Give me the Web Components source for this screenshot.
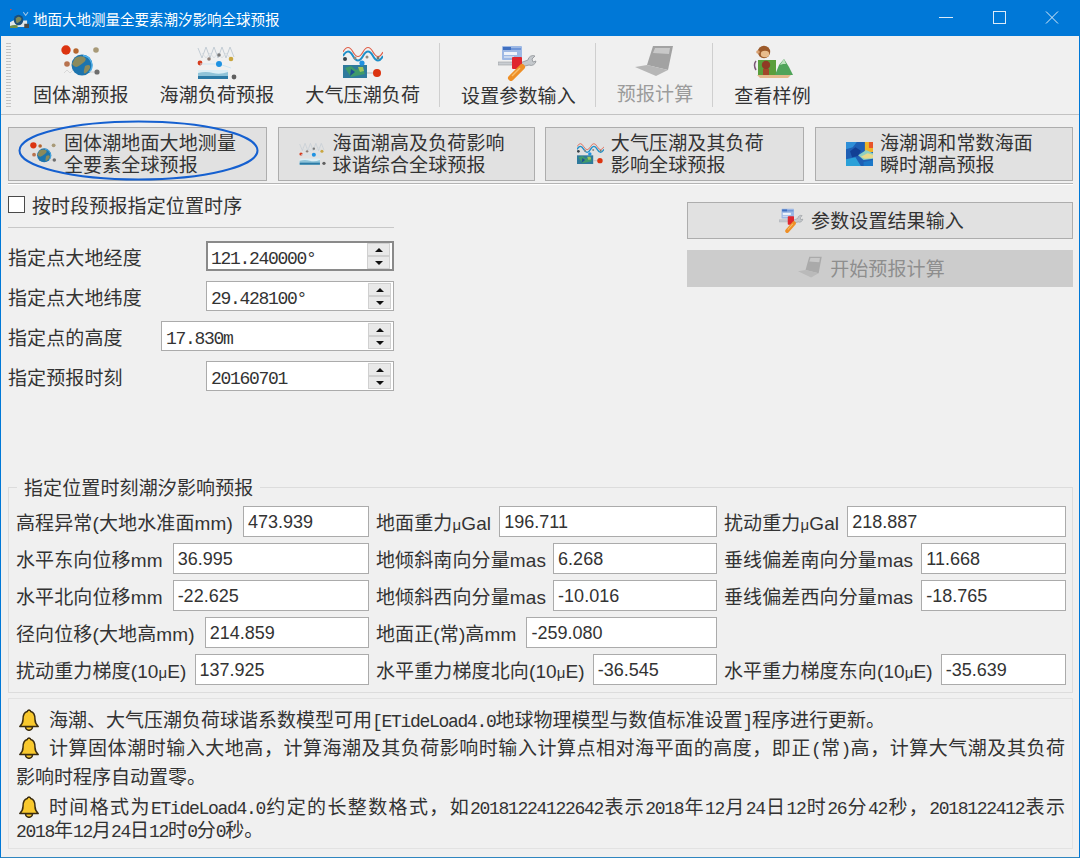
<!DOCTYPE html>
<html lang="zh-CN">
<head>
<meta charset="utf-8">
<title>地面大地测量全要素潮汐影响全球预报</title>
<style>
  html, body { margin: 0; height: 100%; }
  body { font-family: "Liberation Sans", "Noto Sans CJK SC", sans-serif; font-size: 19px; letter-spacing: .12px; color: #333; background: #f0f0f0; }
</style>
</head>
<body>
<tide-app>
  <win-titlebar slot="title">地面大地测量全要素潮汐影响全球预报</win-titlebar>

  <app-toolbar slot="toolbar">
    <tool-item icon="solid" shift="2">固体潮预报</tool-item>
    <tool-item icon="ocean" shift="2">海潮负荷预报</tool-item>
    <tool-item icon="air" shift="2">大气压潮负荷</tool-item>
    <tool-sep></tool-sep>
    <tool-item icon="tools" shift="3">设置参数输入</tool-item>
    <tool-sep></tool-sep>
    <tool-item icon="laptop" shift="1" disabled>预报计算</tool-item>
    <tool-sep></tool-sep>
    <tool-item icon="monkey" shift="3">查看样例</tool-item>
  </app-toolbar>

  <tab-btn slot="tabs" icon="solid" ringed>固体潮地面大地测量<br>全要素全球预报</tab-btn>
  <tab-btn slot="tabs" icon="ocean">海面潮高及负荷影响<br>球谐综合全球预报</tab-btn>
  <tab-btn slot="tabs" icon="air">大气压潮及其负荷<br>影响全球预报</tab-btn>
  <tab-btn slot="tabs" icon="heat">海潮调和常数海面<br>瞬时潮高预报</tab-btn>

  <check-row slot="left">按时段预报指定位置时序</check-row>
  <spin-field slot="left" label="指定点大地经度" value="121.240000°" width="188" focused></spin-field>
  <spin-field slot="left" label="指定点大地纬度" value="29.428100°" width="188"></spin-field>
  <spin-field slot="left" label="指定点的高度" value="17.830m" width="233"></spin-field>
  <spin-field slot="left" label="指定预报时刻" value="20160701" width="188"></spin-field>

  <tab-btn slot="right" icon="tools" wide>参数设置结果输入</tab-btn>
  <tab-btn slot="right" icon="laptop" wide disabled>开始预报计算</tab-btn>

  <tide-group slot="group" legend="指定位置时刻潮汐影响预报">
    <tide-field label="高程异常(大地水准面mm)" value="473.939"></tide-field>
    <tide-field label="地面重力μGal" value="196.711" gap="8"></tide-field>
    <tide-field label="扰动重力μGal" value="218.887" gap="8"></tide-field>
    <tide-field label="水平东向位移mm" value="36.995"></tide-field>
    <tide-field label="地倾斜南向分量mas" value="6.268" gap="7"></tide-field>
    <tide-field label="垂线偏差南向分量mas" value="11.668" gap="8"></tide-field>
    <tide-field label="水平北向位移mm" value="-22.625"></tide-field>
    <tide-field label="地倾斜西向分量mas" value="-10.016" gap="7"></tide-field>
    <tide-field label="垂线偏差西向分量mas" value="-18.765" gap="8"></tide-field>
    <tide-field label="径向位移(大地高mm)" value="214.859"></tide-field>
    <tide-field label="地面正(常)高mm" value="-259.080"></tide-field>
    <span></span>
    <tide-field label="扰动重力梯度(10μE)" value="137.925" gap="8"></tide-field>
    <tide-field label="水平重力梯度北向(10μE)" value="-36.545" gap="8"></tide-field>
    <tide-field label="水平重力梯度东向(10μE)" value="-35.639" gap="8"></tide-field>
  </tide-group>

  <note-panel slot="notes">
    <note-line bell>海潮、大气压潮负荷球谐系数模型可用<m-t>[ETideLoad4.0</m-t>地球物理模型与数值标准设置<m-t>]</m-t>程序进行更新。</note-line>
    <note-line bell full top="4">计算固体潮时输入大地高，计算海潮及其负荷影响时输入计算点相对海平面的高度，即正<m-t>(</m-t>常<m-t>)</m-t>高，计算大气潮及其负荷</note-line>
    <note-line top="5">影响时程序自动置零。</note-line>
    <note-line bell full top="6">时间格式为<m-t>ETideLoad4.0</m-t>约定的长整数格式，如<m-t>20181224122642</m-t>表示<m-t>2018</m-t>年<m-t>12</m-t>月<m-t>24</m-t>日<m-t>12</m-t>时<m-t>26</m-t>分<m-t>42</m-t>秒，<m-t>2018122412</m-t>表示</note-line>
    <note-line top="-1"><m-t>2018</m-t>年<m-t>12</m-t>月<m-t>24</m-t>日<m-t>12</m-t>时<m-t>0</m-t>分<m-t>0</m-t>秒。</note-line>
  </note-panel>
</tide-app>

<script>
const ICONS = {
  solid: `
    <circle cx="5" cy="5" r="4.700" fill="#dc3410"/>
    <circle cx="15" cy="6" r="2.700" fill="#b5662e"/>
    <circle cx="35" cy="5" r="2.800" fill="#a89a78"/>
    <circle cx="6" cy="19" r="2.800" fill="#b8734f"/>
    <path d="M3 28l3-3 3 3 3-3 3 3" fill="none" stroke="#d8d8d8"/>
    <circle cx="21" cy="20" r="10.500" fill="#1c74ae"/>
    <path d="M14 13q5-3 9-1t-1 6-7 4-4-3zM24 21q4-2 5 0t-3 6-3-2z" fill="#8a8a5c"/>
    <path d="M22 10.500a10 10 0 0 1 6 17" fill="none" stroke="#4fb0ea" stroke-width="1.300"/>
    <path d="M29 27h4" stroke="#ccc"/>
    <circle cx="36" cy="27" r="2.600" fill="#6e6e6e"/>`,
  ocean: `
    <path d="M1 3l4 10 4-11 4 11 4-11 4 11 4-11 4 11 4-11 4 10" fill="none" stroke="#c3ccd4" stroke-width="1"/>
    <path d="M5 8l4 5 4-5 4 5 4-5 4 5 4-5 4 5" fill="none" stroke="#d6dce0" stroke-width=".8"/>
    <circle cx="3" cy="18" r="2.400" fill="#d63c1e"/>
    <circle cx="12" cy="14" r="1.800" fill="#8f8078"/>
    <circle cx="22" cy="10" r="1.800" fill="#777"/>
    <circle cx="34" cy="14" r="2.300" fill="#c9a63f"/>
    <path d="M3 19l19 0 12 4" fill="none" stroke="#cfe4f0"/>
    <circle cx="22" cy="19" r="3" fill="#1f92e2"/>
    <path d="M1 25h30v9H1z" fill="#dbeef5"/>
    <path d="M1 28q8-2 15 0t15-1v7H1z" fill="#8fc3d8"/>
    <path d="M1 31h30v3H1z" fill="#2b7aa6"/>
    <circle cx="37" cy="32" r="2.400" fill="#5f5f5f"/>`,
  air: `
    <path d="M0 8q5-9 10 0t10 0 10 0 10 0" fill="none" stroke="#e0604a" stroke-width="1.200" transform="translate(0 -1)"/>
    <path d="M0 9q5-9 10 0t10 0 10 0 10 0" fill="none" stroke="#1f8fc8" stroke-width="2" transform="translate(0 2)"/>
    <circle cx="2" cy="14" r="2" fill="#38424a"/><circle cx="12" cy="13" r="1.500" fill="#8f8a80"/><circle cx="24" cy="12" r="1.500" fill="#8f8a80"/><circle cx="35" cy="13" r="1.500" fill="#6f7a70"/>
    <rect y="20" width="24" height="13" fill="#2f7a9c"/>
    <path d="M2 23l6-2 5 4 6-3 3 7-14 3z" fill="#3f9a6a"/><path d="M8 24l4 3-5 4z" fill="#1e4f94"/><path d="M15 22l5 0 1 4-4 1z" fill="#9fc65a"/>
    <circle cx="19" cy="18" r="2.600" fill="#1f92e2"/>
    <path d="M24 28h7" stroke="#bbb"/>
    <circle cx="34" cy="28" r="4" fill="#dc3410"/>`,
  tools: `
    <rect x="4" y="1" width="20" height="14" rx="1" fill="#9db8e4"/>
    <rect x="5" y="2" width="8" height="3" fill="#3f6fc0"/><rect x="13" y="3" width="10" height="2" fill="#6f96d8"/>
    <rect x="6" y="7" width="13" height="3" fill="#eef3fa"/><rect x="6" y="11" width="10" height="2" fill="#c9d8ef"/>
    <path d="M0 17h17v3H0z" fill="#c9cdd2" stroke="#9a9ea2" stroke-width=".6"/>
    <path d="M22 18l8-3a5 5 0 0 1 7-4l-3 3 1 3 3-1a5 5 0 0 1-7 4l-8 2z" fill="#c4c8cc" stroke="#8e9296" stroke-width=".8"/>
    <rect x="14" y="12" width="10" height="12" rx="1" fill="#e0262e"/>
    <path d="M24 22L13 33" stroke="#ee8f26" stroke-width="6" stroke-linecap="round"/>
    <path d="M22 23L14 31" stroke="#f8bd6a" stroke-width="1.500"/>`,
  laptop: `
    <path d="M18 1h20l-5 24-21-5z" fill="#a2a2a2"/>
    <path d="M20 3h15l-1 6-16-1z" fill="#c8c8c8"/>
    <path d="M12 20l21 5-12 6L0 22z" fill="#b6b6b6"/>`,
  monkey: `
    <circle cx="11" cy="7" r="6.200" fill="#9c5a2a"/>
    <ellipse cx="12" cy="9" rx="4.200" ry="3.300" fill="#e9bc8c"/>
    <circle cx="5" cy="7" r="1.800" fill="#d8a070"/>
    <path d="M3 16q-3 4 0 9" fill="none" stroke="#7d5a78" stroke-width="1.500"/>
    <path d="M5 15h18v16H5z" fill="#5a9e3c"/>
    <circle cx="13" cy="20" r="4.200" fill="#8f3a24"/>
    <path d="M10 24h6v7h-6z" fill="#a2462a"/>
    <path d="M22 30l4-10 5-6 5 8 4 8z" fill="#4fa45a"/>
    <path d="M27 20l4-6 2 5-3 0z" fill="#bfe3c0"/>
    <path d="M4 30h34l-3 3H7z" fill="#e3b98c"/>`,
  heat: `
    <rect width="40" height="36" fill="#1f5fb4"/>
    <rect x="28" width="12" height="15" fill="#f0b428"/>
    <rect x="34" width="6" height="9" fill="#e8542a"/>
    <path d="M0 0h16l-6 8-10 3z" fill="#2f8fd8"/>
    <path d="M6 14l8-6 8 5-4 8-9 2z" fill="#123f94"/>
    <path d="M18 20l12-8 10 5v8l-14 2z" fill="#8fd0c0"/>
    <path d="M22 22l10-5 8 2v5l-12 1z" fill="#e8d98a"/>
    <path d="M0 26l14-3 8 13H0z" fill="#2aa0d8"/>
    <path d="M26 30l14-3v9H26z" fill="#1c78c8"/>`,
  app: `
    <circle cx="1" cy="0" r="2.500" fill="#c8504a"/>
    <path d="M28 6l5 6 5-6" fill="none" stroke="#9fc4e4" stroke-width="2"/>
    <path d="M0 25q10-6 20-3l16 0v12H0z" fill="#dfe6ea"/>
    <path d="M0 32q8-3 16-1v5H0z" fill="#6f8f4a"/>
    <circle cx="18" cy="21" r="10" fill="#1d4f7a"/>
    <path d="M12 18q5-5 10-2t-2 8-7 0z" fill="#7d8a5a"/>
    <rect x="30" y="28" width="10" height="8" fill="#4a4a4a"/>`
};

class AppIcon extends HTMLElement {
  constructor() {
    super();
    this.attachShadow({ mode: "open" });
  }

  connectedCallback() {
    const w = this.getAttribute("w") || 40;
    const h = this.getAttribute("h") || 36;
    this.shadowRoot.innerHTML = /* html */`
    <style>
      :host { display: block; flex: none; width: ${w}px; height: ${h}px; }
      svg { display: block; width: 100%; height: 100%; filter: blur(.4px); }
    </style>
    <svg viewBox="0 0 40 36" preserveAspectRatio="none">${ICONS[this.getAttribute("name")] || ""}</svg>`;
  }
}

class TideApp extends HTMLElement {
  constructor() {
    super();
    this.attachShadow({ mode: "open" });
    this.shadowRoot.innerHTML = /* html */`
    <style>
      :host {
        display: flex;
        flex-direction: column;
        box-sizing: border-box;
        height: 858px;
        border: 1px solid #0078d7;
        border-top: 0;
        border-bottom-color: #2f86c0;
      }
      .body { display: flex; flex-direction: column; flex: 1; padding: 0 6px 8px 7px; min-height: 0; }
      .tabs { display: grid; grid-template-columns: 259px 257px 259px 258px; justify-content: space-between; margin-top: 12px; height: 54px; }
      .rule { height: 1px; margin-top: 2px; background: #b4b4b4; box-shadow: 0 1px 0 #fff; }
      .main { display: flex; justify-content: space-between; flex: 1; }
      .left { width: 386px; display: flex; flex-direction: column; gap: 10px; }
      .right { width: 386px; display: grid; grid-auto-rows: 37px; gap: 11px; padding-top: 18px; }
    </style>
    <slot name="title"></slot>
    <slot name="toolbar"></slot>
    <div class="body">
      <div class="tabs"><slot name="tabs"></slot></div>
      <div class="rule"></div>
      <div class="main">
        <div class="left"><slot name="left"></slot></div>
        <div class="right"><slot name="right"></slot></div>
      </div>
      <slot name="group"></slot>
      <slot name="notes"></slot>
    </div>`;
  }
}

class WinTitlebar extends HTMLElement {
  constructor() {
    super();
    this.attachShadow({ mode: "open" });
    this.shadowRoot.innerHTML = /* html */`
    <style>
      :host {
        display: flex;
        align-items: center;
        height: 36px;
        margin: 0 -1px;
        padding-left: 10px;
        background: #0078d7;
        color: #fff;
        font-size: 14.5px;
        letter-spacing: 0;
      }
      app-icon { margin-right: 4px; }
      .title { flex: 1; }
      .ctl { display: flex; margin-right: 2px; }
      .btn { width: 53px; display: flex; justify-content: center; }
      svg { display: block; width: 14px; height: 14px; fill: none; stroke: #dcebf8; stroke-width: 1; }
    </style>
    <app-icon name="app" w="19" h="19"></app-icon>
    <span class="title"><slot></slot></span>
    <div class="ctl">
      <div class="btn"><svg viewBox="0 0 14 14"><path d="M0 6.500h14"/></svg></div>
      <div class="btn"><svg viewBox="0 0 14 14"><rect x="1.500" y=".5" width="12" height="12"/></svg></div>
      <div class="btn"><svg viewBox="0 0 14 14"><path d="M1 .5l12 12M13 .5l-12 12"/></svg></div>
    </div>`;
  }
}

class AppToolbar extends HTMLElement {
  constructor() {
    super();
    this.attachShadow({ mode: "open" });
    this.shadowRoot.innerHTML = /* html */`
    <style>
      :host {
        display: flex;
        box-sizing: border-box;
        height: 79px;
        padding-left: 5px;
        border-bottom: 1px solid #c2c2c2;
      }
      .grip {
        width: 5px;
        margin: 6px 6.500px 5px 0;
        background: radial-gradient(circle, #bdbdbd 0.8px, transparent 1px) 0 0 / 2.500px 3px;
      }
    </style>
    <div class="grip"></div>
    <slot></slot>`;
  }
}

class ToolItem extends HTMLElement {
  constructor() {
    super();
    this.attachShadow({ mode: "open" });
  }

  connectedCallback() {
    const shift = this.getAttribute("shift") || 0;
    this.shadowRoot.innerHTML = /* html */`
    <style>
      :host {
        display: flex;
        flex-direction: column;
        align-items: center;
        padding: 9px 15.500px 0;
        color: #333;
        white-space: nowrap;
      }
      :host([disabled]) { color: #9b9b9b; }
      app-icon { margin-bottom: -1px; }
      span { line-height: 28px; margin-top: ${shift}px; }
    </style>
    <app-icon name="${this.getAttribute("icon")}"></app-icon>
    <span><slot></slot></span>`;
  }
}

class ToolSep extends HTMLElement {
  constructor() {
    super();
    this.attachShadow({ mode: "open" });
    this.shadowRoot.innerHTML = /* html */`
    <style>
      :host { display: block; width: 1px; height: 64px; margin: 7px 5.500px 0 3.500px; background: #cfcfcf; }
    </style>`;
  }
}

class TabBtn extends HTMLElement {
  constructor() {
    super();
    this.attachShadow({ mode: "open" });
  }

  connectedCallback() {
    const wide = this.hasAttribute("wide");
    const ring = this.hasAttribute("ringed") ? /* html */`
      <svg class="ring" viewBox="0 0 241 61"><ellipse cx="120.500" cy="30.500" rx="119" ry="29" /></svg>` : "";
    this.shadowRoot.innerHTML = /* html */`
    <style>
      :host {
        position: relative;
        display: flex;
        align-items: center;
        justify-content: center;
        gap: 7px;
        box-sizing: border-box;
        padding-right: ${wide ? 17 : 9}px;
        background: #e1e1e1;
        border: 1px solid #adadad;
        line-height: 22px;
        color: #333;
        white-space: nowrap;
      }
      :host([disabled]) { background: #cccccc; border-color: #cccccc; color: #8e8e8e; }
      :host([disabled]) app-icon { opacity: .8; }
      span { padding-top: 2px; }
      .ring { position: absolute; left: 9px; top: -8px; width: 241px; height: 61px; overflow: visible; }
      ellipse { fill: none; stroke: #1560d0; stroke-width: 2; }
    </style>
    <app-icon name="${this.getAttribute("icon")}" w="${wide ? 25 : 27}" h="${wide ? 25 : 24}"></app-icon>
    <span><slot></slot></span>
    ${ring}`;
  }
}

class CheckRow extends HTMLElement {
  constructor() {
    super();
    this.attachShadow({ mode: "open" });
    this.shadowRoot.innerHTML = /* html */`
    <style>
      :host {
        display: flex;
        align-items: center;
        gap: 7px;
        box-sizing: border-box;
        height: 44px;
        margin-bottom: 3px;
        padding: 8px 0 10px;
        border-bottom: 1px solid #c8c8c8;
        white-space: nowrap;
      }
      i { display: block; width: 15px; height: 15px; border: 1px solid #4a4a4a; background: #fff; }
    </style>
    <i></i><span><slot></slot></span>`;
  }
}

class SpinField extends HTMLElement {
  constructor() {
    super();
    this.attachShadow({ mode: "open" });
  }

  connectedCallback() {
    this.shadowRoot.innerHTML = /* html */`
    <style>
      :host {
        display: flex;
        align-items: center;
        justify-content: space-between;
        height: 30px;
        white-space: nowrap;
      }
      .box {
        display: flex;
        align-items: center;
        box-sizing: border-box;
        width: ${this.getAttribute("width")}px;
        height: 100%;
        padding-left: 4px;
        background: #fff;
        border: 1px solid #ababab;
        font: 18px "Liberation Mono", monospace;
        letter-spacing: -1.300px;
      }
      :host([focused]) .box { border: 2px solid #8a8a8a; padding-left: 3px; }
      .val { flex: 1; padding-top: 6px; }
      .spin { display: grid; grid-template-rows: 1fr 1fr; gap: 0; width: 23px; height: 26px; margin-right: 2px; }
      .spin b {
        display: flex; align-items: center; justify-content: center;
        background: #e9e9e9; border: 1px solid #d0d0d0;
      }
      .up::before { content: ""; border: 4px solid transparent; border-top: 0; border-bottom: 4px solid #111; }
      .down::before { content: ""; border: 4px solid transparent; border-bottom: 0; border-top: 4px solid #111; }
    </style>
    <span>${this.getAttribute("label")}</span>
    <div class="box">
      <span class="val">${this.getAttribute("value")}</span>
      <div class="spin"><b class="up"></b><b class="down"></b></div>
    </div>`;
  }
}

class TideGroup extends HTMLElement {
  constructor() {
    super();
    this.attachShadow({ mode: "open" });
  }

  connectedCallback() {
    this.shadowRoot.innerHTML = /* html */`
    <style>
      :host { display: block; }
      fieldset {
        margin: 0;
        padding: 5px 6px 7px 7px;
        border: 1px solid #dcdcdc;
        min-width: 0;
      }
      legend { margin-left: 1px; padding: 4px 7px 0; line-height: 24px; height: 24px; }
      .grid { display: grid; grid-template-columns: 353px 341px 342px; grid-auto-rows: 31px; gap: 6px 7px; }
    </style>
    <fieldset>
      <legend>${this.getAttribute("legend")}</legend>
      <div class="grid"><slot></slot></div>
    </fieldset>`;
  }
}

class TideField extends HTMLElement {
  constructor() {
    super();
    this.attachShadow({ mode: "open" });
  }

  connectedCallback() {
    const label = this.getAttribute("label").replace("μ", "<i>μ</i>");
    this.shadowRoot.innerHTML = /* html */`
    <style>
      :host { display: flex; align-items: center; gap: ${this.getAttribute("gap") || 10}px; white-space: nowrap; }
      i { font-style: normal; font-size: 15px; }
      .val {
        flex: 1;
        box-sizing: border-box;
        height: 100%;
        padding: 0 4px;
        background: #fff;
        border: 1px solid #ababab;
        font-size: 18px;
        letter-spacing: 0;
        line-height: 30px;
        min-width: 0;
      }
    </style>
    <span>${label}</span>
    <div class="val">${this.getAttribute("value")}</div>`;
  }
}

class NotePanel extends HTMLElement {
  constructor() {
    super();
    this.attachShadow({ mode: "open" });
    this.shadowRoot.innerHTML = /* html */`
    <style>
      :host {
        display: block;
        box-sizing: border-box;
        height: 151px;
        margin-top: 5px;
        padding: 9px 7px 0;
        border: 1px solid #e2e2e2;
        letter-spacing: 0;
      }
    </style>
    <slot></slot>`;
  }
}

class NoteLine extends HTMLElement {
  constructor() {
    super();
    this.attachShadow({ mode: "open" });
  }

  connectedCallback() {
    const bell = this.hasAttribute("bell") ? /* html */`
      <svg viewBox="0 0 20 22">
        <path d="M10 1a2 2 0 0 1 1.800 1.600C15.500 3.500 16 7 16 10.500c0 3 1.200 5 3.200 7H.8c2-2 3.200-4 3.200-7C4 7 4.500 3.500 8.200 2.600A2 2 0 0 1 10 1z" fill="#f9c92e" stroke="#3a2c10" stroke-width="1.500" stroke-linejoin="round"/>
        <path d="M6.500 17.800a3.500 3.500 0 0 0 7 0z" fill="#f9c92e" stroke="#3a2c10" stroke-width="1.500"/>
      </svg>` : "";
    this.shadowRoot.innerHTML = /* html */`
    <style>
      :host {
        display: flex;
        align-items: center;
        gap: 10px;
        height: 24px;
        margin-top: ${this.getAttribute("top") || 0}px;
        white-space: nowrap;
      }
      :host([bell]) { padding-left: 3px; }
      svg { display: block; flex: none; width: 20px; height: 22px; }
      span { flex: 1; line-height: 24px; margin-top: 2px; }
      :host([full]) span { white-space: normal; text-align: justify; text-align-last: justify; text-justify: inter-character; }
    </style>
    ${bell}<span><slot></slot></span>`;
  }
}

class MonoText extends HTMLElement {
  constructor() {
    super();
    // no whitespace here: this host is inline and sits inside running text
    this.attachShadow({ mode: "open" }).innerHTML =
      `<style>:host { font: 18px "Liberation Mono", monospace; letter-spacing: -1.300px; }</style><slot></slot>`;
  }
}

customElements.define("app-icon", AppIcon);
customElements.define("tide-app", TideApp);
customElements.define("win-titlebar", WinTitlebar);
customElements.define("app-toolbar", AppToolbar);
customElements.define("tool-item", ToolItem);
customElements.define("tool-sep", ToolSep);
customElements.define("tab-btn", TabBtn);
customElements.define("check-row", CheckRow);
customElements.define("spin-field", SpinField);
customElements.define("tide-group", TideGroup);
customElements.define("tide-field", TideField);
customElements.define("note-panel", NotePanel);
customElements.define("note-line", NoteLine);
customElements.define("m-t", MonoText);
</script>
</body>
</html>
